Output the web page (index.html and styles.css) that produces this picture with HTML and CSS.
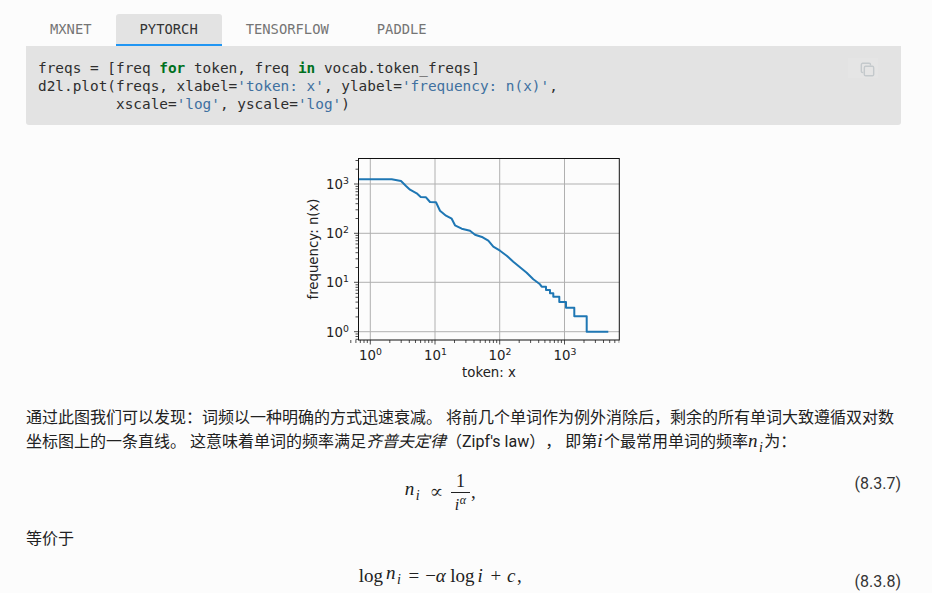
FILE: index.html
```html
<!DOCTYPE html>
<html lang="zh">
<head>
<meta charset="utf-8">
<title>Zipf's law</title>
<link rel="stylesheet" href="styles.css">
</head>
<body>
<main class="content">
  <nav class="tabs">
    <span class="tab">MXNET</span>
    <span class="tab active">PYTORCH</span>
    <span class="tab">TENSORFLOW</span>
    <span class="tab">PADDLE</span>
  </nav>
  <div class="code-block">
    <button class="copy" aria-label="copy">
      <svg width="15" height="15" viewBox="0 0 16 16" fill="none" stroke="#c4c9cc" stroke-width="1.500">
        <path d="M3.6 11.2H2.8A1.4 1.4 0 0 1 1.4 9.800V2.800A1.400 1.400 0 0 1 2.800 1.400H9.800A1.400 1.400 0 0 1 11.200 2.800V3.600"/>
        <rect x="4.600" y="4.600" width="10" height="10" rx="1.400"/>
      </svg>
    </button>
<pre class="code">freqs = [freq <b class="kw">for</b> token, freq <b class="kw">in</b> vocab.token_freqs]
d2l.plot(freqs, xlabel=<span class="str">'token: x'</span>, ylabel=<span class="str">'frequency: n(x)'</span>,
         xscale=<span class="str">'log'</span>, yscale=<span class="str">'log'</span>)</pre>
  </div>
  <figure class="figure">
    <svg class="plot" width="330" height="235" viewBox="300 150 330 235">
      <defs>
        <clipPath id="axes-x"><rect x="350" y="158.300" width="269.300" height="190"/></clipPath>
        <clipPath id="axes-y"><rect x="350" y="158.300" width="269.300" height="181.700"/></clipPath>
        <g id="xminor"><path d="M19.500 0v3M30.900 0v3M39 0v3M45.200 0v3M50.300 0v3M54.700 0v3M58.400 0v3M61.700 0v3"/></g>
        <g id="yminor"><path d="M0-14.800h-3M0-23.500h-3M0-29.600h-3M0-34.400h-3M0-38.300h-3M0-41.600h-3M0-44.400h-3M0-46.900h-3"/></g>
      </defs>
      <path class="grid" d="M370.300 158.300V340M435 158.300V340M499.700 158.300V340M564.500 158.300V340M358.500 184H619.300M358.500 233.300H619.300M358.500 282.300H619.300M358.500 331.700H619.300"/>
      <polyline class="curve" points="358.500,179.300 391.700,179.300 401,181 406,186 410,189.700 416.700,193.300 420.700,197 426,197.300 430,202 436,202.300 440,210.700 446,215.700 451.700,218.700 455,225.300 461.700,228.700 470,230.700 475,234.700 482.700,237.300 488.300,240.700 493.300,246.700 500,250.700 506.700,255.700 513.300,261.700 520,267.300 526.700,272.700 533.300,279.300 540,284.300 541.700,286.700 546,286.700 546,290 550,290 550,293.300 553.300,293.300 553.300,296.700 559.300,296.700 559.300,302 566,302 566,307.700 574.300,307.700 574.300,316.300 586.700,316.300 586.700,331.700 608.300,331.700"/>
      <rect class="frame" x="358.500" y="158.500" width="260.800" height="181.500"/>
      <g class="ticks" clip-path="url(#axes-x)">
        <path d="M370.300 340v4.500M435 340v4.500M499.700 340v4.500M564.500 340v4.500"/>
        <use href="#xminor" x="305.600" y="340"/>
        <use href="#xminor" x="370.300" y="340"/>
        <use href="#xminor" x="435" y="340"/>
        <use href="#xminor" x="499.700" y="340"/>
        <use href="#xminor" x="564.500" y="340"/>
      </g>
      <g class="ticks" clip-path="url(#axes-y)">
        <path d="M358.500 184h-4.500M358.500 233.300h-4.500M358.500 282.300h-4.500M358.500 331.700h-4.500"/>
        <use href="#yminor" x="358.500" y="380.900"/>
        <use href="#yminor" x="358.500" y="331.700"/>
        <use href="#yminor" x="358.500" y="282.300"/>
        <use href="#yminor" x="358.500" y="233.300"/>
        <use href="#yminor" x="358.500" y="184"/>
      </g>
      <g class="labels">
        <text x="326" y="189">10<tspan class="sup" dy="-5">3</tspan></text>
        <text x="326" y="238">10<tspan class="sup" dy="-5">2</tspan></text>
        <text x="326" y="287">10<tspan class="sup" dy="-5">1</tspan></text>
        <text x="326" y="337">10<tspan class="sup" dy="-5">0</tspan></text>
        <text x="359" y="360">10<tspan class="sup" dy="-5">0</tspan></text>
        <text x="424" y="360">10<tspan class="sup" dy="-5">1</tspan></text>
        <text x="488.500" y="360">10<tspan class="sup" dy="-5">2</tspan></text>
        <text x="553.500" y="360">10<tspan class="sup" dy="-5">3</tspan></text>
        <text x="489" y="377" text-anchor="middle">token: x</text>
        <text transform="translate(318 249) rotate(-90)" text-anchor="middle">frequency: n(x)</text>
      </g>
    </svg>
  </figure>
  <p class="para">通过此图我们可以发现：词频以一种明确的方式迅速衰减。 将前几个单词作为例外消除后，剩余的所有单词大致遵循双对数坐标图上的一条直线。 这意味着单词的频率满足<em>齐普夫定律</em>（Zipf's law）， 即第<i class="m">i</i>个最常用单词的频率<i class="m">n<sub>i</sub></i>为：</p>
  <div class="equation eq-one">
    <div class="math">
      <i class="m">n<sub>i</sub></i><span class="rel">∝</span>
      <span class="frac"><span class="num">1</span><span class="den"><i class="m">i<sup>α</sup></i></span></span><span class="comma">,</span>
    </div>
    <span class="eq-no">(8.3.7)</span>
  </div>
  <p class="para short">等价于</p>
  <div class="equation eq-two">
    <div class="math">
      <span>log</span><i class="m gap">n<sub>i</sub></i><span class="rel">=</span><span>−</span><i class="m">α</i><span class="gap">log</span><i class="m gap">i</i><span class="rel">+</span><i class="m">c</i><span>,</span>
    </div>
    <span class="eq-no">(8.3.8)</span>
  </div>
</main>
</body>
</html>
```
FILE: styles.css
```css
html, body {
  margin: 0;
  height: 593px;
  overflow: hidden;
  background: #fcfcfc;
}
body {
  color: #212121;
  font: 16px/24px Roboto, "Noto Sans CJK SC", sans-serif;
  text-spacing-trim: space-all;
}
.content {
  padding: 14px 31px 0 26px;
}
.tabs {
  display: flex;
  height: 32px;
  font: 13.800px/30px "DejaVu Sans Mono", monospace;
}
.tab {
  padding: 0 24px;
  color: #757575;
  border-bottom: 2px solid transparent;
}
.tab.active {
  color: #333;
  background: #e3e3e3;
  border-bottom-color: #2196f3;
  border-radius: 3px 3px 0 0;
}
.code-block {
  position: relative;
  background: #e3e3e3;
  border-radius: 0 0 3px 3px;
  height: 79px;
  box-sizing: border-box;
  padding: 13px 12px;
}
.code {
  margin: 0;
  color: #2e2e2e;
  font: 14.400px/18px "DejaVu Sans Mono", monospace;
}
.kw { color: #007020; }
.str { color: #4070a0; }
.copy {
  position: absolute;
  top: 12px;
  right: 23px;
  width: 30px;
  height: 20px;
  box-sizing: border-box;
  padding: 2px 3px 0 0;
  border: 0;
  background: #e5e5e5;
  display: flex;
  align-items: center;
  justify-content: flex-end;
}
.figure {
  margin: 25px 0 0;
  height: 235px;
  display: flex;
  justify-content: center;
  padding-left: 2px;
}
.plot { display: block; }
.grid { fill: none; stroke: #b0b0b0; stroke-width: 1; }
.curve { fill: none; stroke: #1f77b4; stroke-width: 2; stroke-linejoin: round; }
.frame { fill: none; stroke: #111; stroke-width: 1; }
.ticks { fill: none; stroke: #222; stroke-width: 0.800; }
.labels { fill: #222; font: 13.300px "DejaVu Sans", sans-serif; }
.sup { font-size: 9.300px; }
.para {
  margin: 21px 0 0;
}
.para em {
  font-style: italic;
}
.m {
  font: italic 19px/0 "Liberation Serif", serif;
  letter-spacing: 1.500px;
  color: #212121;
}
.m sub, .m sup {
  font-size: 14px;
  line-height: 0;
}
.equation {
  display: flex;
  align-items: center;
}
.math {
  flex: 1;
  display: flex;
  justify-content: center;
  align-items: center;
  font: 19px/24px "Liberation Serif", serif;
}
.eq-no { color: #333; }
.eq-one .eq-no { margin-bottom: 16px; }
.eq-two .eq-no { margin-top: 12px; }
.rel { margin: 0 6px; }
.gap { margin-left: 3px; }
.eq-one { margin-top: 16px; height: 44px; }
.eq-one .rel { margin: 0 5px 0 6px; }
.frac {
  display: inline-flex;
  flex-direction: column;
  align-items: center;
}
.num {
  font-size: 18px;
  line-height: 22px;
  padding: 0 5px;
  border-bottom: 1px solid #212121;
}
.den { line-height: 21px; }
.den .m { font-size: 16px; letter-spacing: 0.500px; }
.den .m sup { font-size: 12px; }
.comma { margin-left: 1px; }
.short { margin-top: 13px; }
.eq-two { margin-top: 10px; height: 30px; }
```
